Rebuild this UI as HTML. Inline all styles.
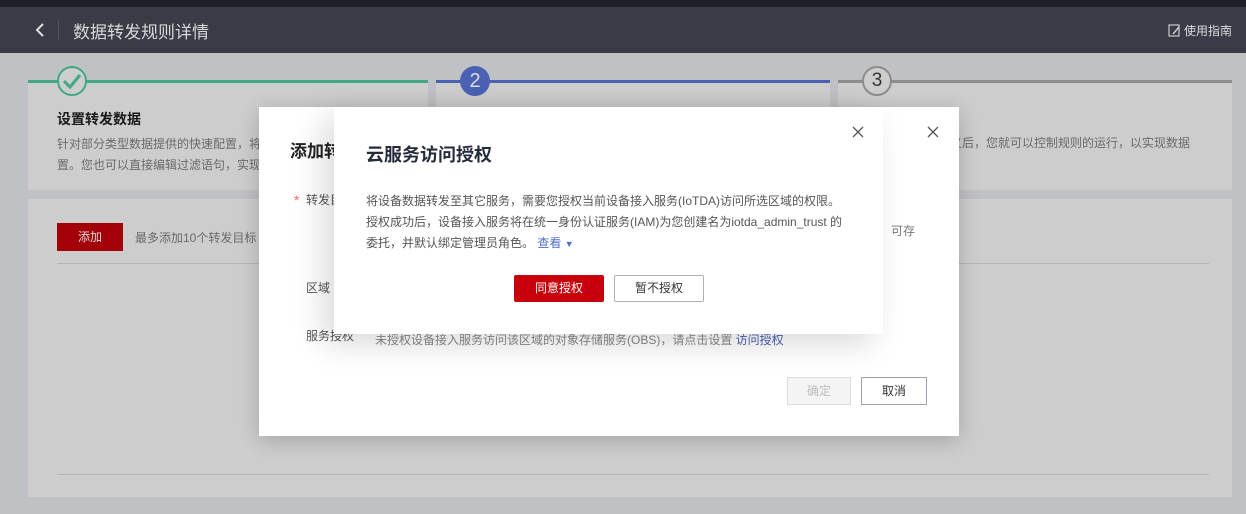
<!DOCTYPE html>
<html><head><meta charset="utf-8"><style>
*{margin:0;padding:0;box-sizing:border-box}
body{width:1246px;height:514px;overflow:hidden;background:#c0c1c4;font-family:"Liberation Sans","Noto Sans CJK SC",sans-serif;position:relative;font-size:12px}
.a{position:absolute}
.card{background:#cdcdcd}
</style></head><body>
<div class="a" style="left:0;top:0;width:1246px;height:7px;background:#1f2128"></div>
<div class="a" style="left:0;top:7px;width:1246px;height:46px;background:#393c47"></div>
<svg class="a" style="left:34px;top:22px" width="12" height="16"><path d="M9 2 L3 8 L9 14" stroke="#ddd" stroke-width="2" fill="none"/></svg>
<div class="a" style="left:58px;top:20px;width:1px;height:20px;background:#555"></div>
<div class="a" style="left:73px;top:18px;font-size:17px;color:#d8d8d8">数据转发规则详情</div>
<svg class="a" style="left:1168px;top:24px" width="13" height="13"><rect x="1" y="1" width="10" height="11" fill="none" stroke="#ccc" stroke-width="1.2"/><path d="M5 10 L11 3" stroke="#ccc" stroke-width="1.5"/></svg>
<div class="a" style="left:1184px;top:22px;font-size:12px;color:#ddd">使用指南</div>

<div class="a card" style="left:28px;top:82px;width:400px;height:108px"></div>
<div class="a card" style="left:436px;top:82px;width:394px;height:108px"></div>
<div class="a card" style="left:838px;top:82px;width:394px;height:108px"></div>
<div class="a" style="left:28px;top:80px;width:400px;height:3px;background:#3fa983"></div>
<div class="a" style="left:436px;top:80px;width:394px;height:3px;background:#4b61b4"></div>
<div class="a" style="left:838px;top:80px;width:394px;height:3px;background:#8c8c8c"></div>
<div class="a" style="left:57px;top:66px;width:30px;height:30px;border-radius:50%;border:2px solid #3fa983;background:#cdcdcd"></div>
<svg class="a" style="left:61px;top:70px" width="22" height="22"><path d="M3 11 L9 17 L19 5" stroke="#3fa983" stroke-width="3" fill="none"/></svg>
<div class="a" style="left:460px;top:66px;width:30px;height:30px;border-radius:50%;background:#4b61b4;color:#dde;font-size:20px;text-align:center;line-height:30px">2</div>
<div class="a" style="left:862px;top:66px;width:30px;height:30px;border-radius:50%;border:2px solid #8c8c8c;background:#cdcdcd;color:#333;font-size:19px;text-align:center;line-height:26px">3</div>
<div class="a" style="left:57px;top:109px;font-size:14px;font-weight:bold;color:#1a1a1a">设置转发数据</div>
<div class="a" style="left:57px;top:134px;font-size:12px;color:#6a6a6a;line-height:21px">针对部分类型数据提供的快速配置，将<br>置。您也可以直接编辑过滤语句，实现</div>
<div class="a" style="left:950px;top:134px;font-size:12px;color:#6a6a6a">义后，您就可以控制规则的运行，以实现数据</div>

<div class="a card" style="left:28px;top:199px;width:1204px;height:298px"></div>
<div class="a" style="left:57px;top:223px;width:66px;height:28px;background:#a30008;color:#ddd;text-align:center;line-height:28px;font-size:12px">添加</div>
<div class="a" style="left:135px;top:229px;color:#6a6a6a">最多添加10个转发目标</div>
<div class="a" style="left:57px;top:263px;width:1152px;height:1px;background:#b5b5b5"></div>
<div class="a" style="left:57px;top:474px;width:1152px;height:1px;background:#b5b5b5"></div>

<div class="a" style="left:259px;top:107px;width:700px;height:329px;background:#fff;box-shadow:0 4px 20px rgba(0,0,0,.2)"></div>
<div class="a" style="left:290px;top:137px;font-size:17px;font-weight:bold;color:#222">添加转</div>
<div class="a" style="left:294px;top:192px;color:#f66;font-size:14px">*</div>
<div class="a" style="left:306px;top:191px;color:#555">转发目</div>
<div class="a" style="left:306px;top:279px;color:#555">区域</div>
<div class="a" style="left:306px;top:327px;color:#555">服务授权</div>
<div class="a" style="left:375px;top:331px;color:#888">未授权设备接入服务访问该区域的对象存储服务(OBS)，请点击设置 <span style="color:#4b61b4">访问授权</span></div>
<div class="a" style="left:891px;top:222px;color:#777">可存</div>
<svg class="a" style="left:927px;top:126px" width="12" height="12"><path d="M1 1 L11 11 M11 1 L1 11" stroke="#555" stroke-width="1.3"/></svg>
<div class="a" style="left:787px;top:377px;width:64px;height:28px;background:#f4f4f4;border:1px solid #ddd;color:#bbb;text-align:center;line-height:26px">确定</div>
<div class="a" style="left:861px;top:377px;width:66px;height:28px;border:1px solid #a0a3ad;color:#333;text-align:center;line-height:26px">取消</div>

<div class="a" style="left:334px;top:107px;width:549px;height:227px;background:#fff;box-shadow:-10px 10px 30px rgba(0,0,0,.15)"></div>
<div class="a" style="left:366px;top:141px;font-size:18px;font-weight:bold;color:#252b3a">云服务访问授权</div>
<svg class="a" style="left:852px;top:126px" width="12" height="12"><path d="M1 1 L11 11 M11 1 L1 11" stroke="#555" stroke-width="1.3"/></svg>
<div class="a" style="left:366px;top:191px;font-size:12px;color:#555;line-height:21px;width:500px">将设备数据转发至其它服务，需要您授权当前设备接入服务(IoTDA)访问所选区域的权限。<br>授权成功后，设备接入服务将在统一身份认证服务(IAM)为您创建名为iotda_admin_trust 的<br>委托，并默认绑定管理员角色。 <span style="color:#526ecc">查看 <span style="font-size:9px">▼</span></span></div>
<div class="a" style="left:514px;top:275px;width:90px;height:27px;background:#c7000b;color:#fff;text-align:center;line-height:27px;border-radius:2px">同意授权</div>
<div class="a" style="left:614px;top:275px;width:90px;height:27px;border:1px solid #adb0b8;color:#333;text-align:center;line-height:25px;border-radius:2px">暂不授权</div>
</body></html>
